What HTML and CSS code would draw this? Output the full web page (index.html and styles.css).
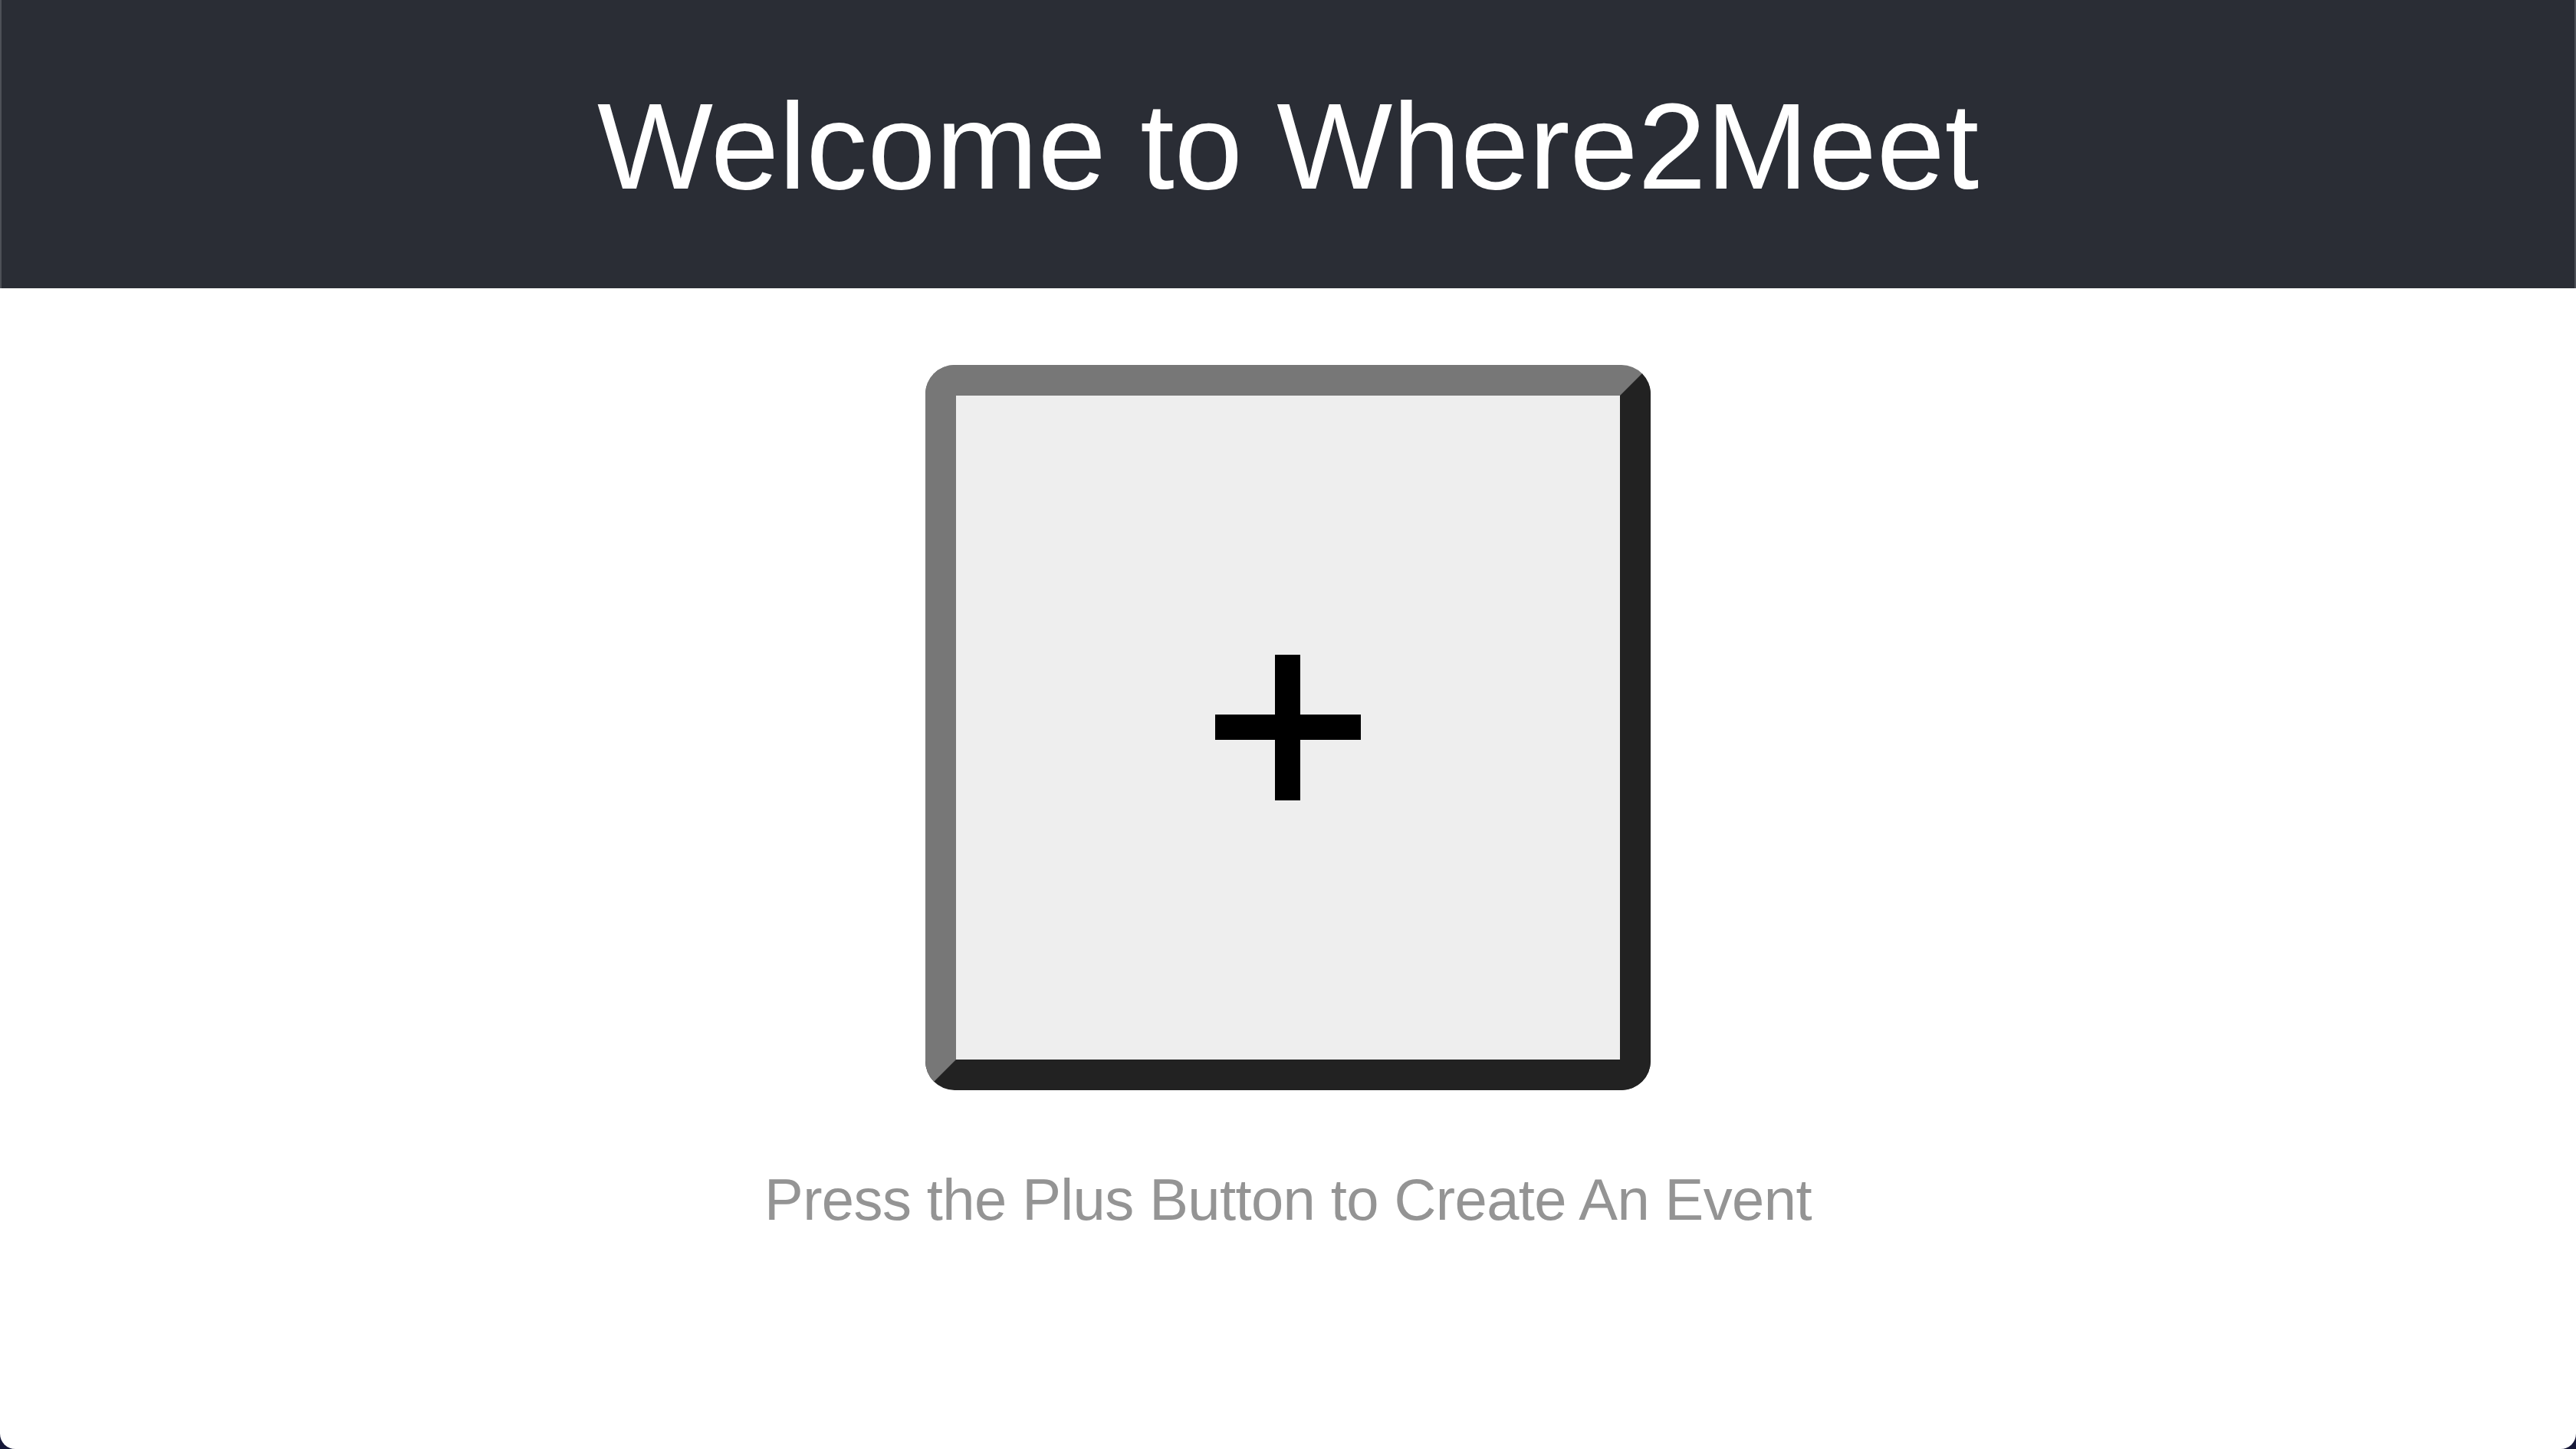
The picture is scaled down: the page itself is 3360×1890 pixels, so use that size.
FILE: index.html
```html
<!DOCTYPE html>
<html lang="en">
<head>
<meta charset="utf-8">
<title>Where2Meet</title>
<link rel="stylesheet" href="styles.css">
</head>
<body>
<div class="app">
  <header class="app-header">
    <h1 class="title">Welcome to Where2Meet</h1>
  </header>
  <main class="content">
    <button class="create-btn" type="button" aria-label="Create event">
      <svg class="plus" width="190" height="190" viewBox="0 0 190 190">
        <rect x="78" y="0" width="33" height="190" fill="#000"/>
        <rect x="0" y="78" width="190" height="33" fill="#000"/>
      </svg>
    </button>
    <p class="hint">Press the Plus Button to Create An Event</p>
  </main>
</div>
</body>
</html>
```
FILE: styles.css
```css
html {
  margin: 0;
  background: #161838;
}
body {
  margin: 0;
  height: 1890px;
  overflow: hidden;
}
.app {
  height: 1890px;
  background: #ffffff;
  border-radius: 0 0 20px 20px;
  overflow: hidden;
  display: flex;
  flex-direction: column;
  font-family: "Liberation Sans", Arial, sans-serif;
}
.app-header {
  box-sizing: border-box;
  height: 376px;
  padding-top: 99px;
  background: #2a2d35;
  border-left: 2px solid #4d5057;
  border-right: 2px solid #4d5057;
  text-align: center;
}
.title {
  margin: 0;
  font-size: 160px;
  font-weight: 400;
  line-height: 184px;
  color: #ffffff;
}
.content {
  display: flex;
  flex-direction: column;
  align-items: center;
  padding-top: 100px;
}
.create-btn {
  box-sizing: border-box;
  width: 946px;
  height: 946px;
  padding: 0;
  margin: 0;
  background: #eeeeee;
  border-style: solid;
  border-width: 40px;
  border-color: #777777 #222222 #222222 #777777;
  border-radius: 38px;
  display: flex;
  align-items: center;
  justify-content: center;
  cursor: pointer;
}
.plus {
  display: block;
}
.hint {
  margin: 99px 0 0 0;
  font-size: 76px;
  line-height: 87px;
  letter-spacing: -0.6px;
  color: #949494;
}
```
